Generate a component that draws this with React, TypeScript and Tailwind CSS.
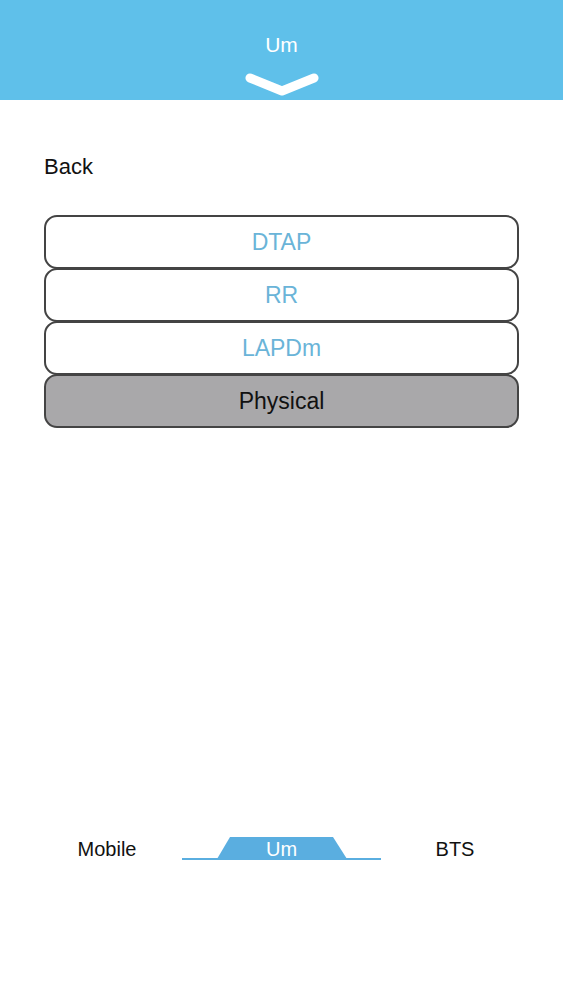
const layers = [
  { name: "DTAP", active: false },
  { name: "RR", active: false },
  { name: "LAPDm", active: false },
  { name: "Physical", active: true },
];

const App = () => {
  return (
    <div className="w-[563px] h-[1000px] bg-white flex flex-col font-['Liberation_Sans',Arial,sans-serif]">
      <header className="h-[100px] bg-[#5fc0ea] flex flex-col items-center">
        <div className="mt-[32px] text-[21px] leading-[26px] text-white">Um</div>
        <svg className="mt-[12px]" width="80" height="28" viewBox="0 0 80 28">
          <path d="M8 8 L40 21 L72 8" fill="none" stroke="white" strokeWidth="9" strokeLinecap="round" strokeLinejoin="round" />
        </svg>
      </header>

      <div className="px-[44px]">
        <div className="mt-[53px] text-[22px] leading-[28px] text-[#111]">Back</div>

        <div className="mt-[34px] flex flex-col">
          {layers.map((layer) => (
            <div
              key={layer.name}
              className={
                layer.active
                  ? "h-[54px] -mt-px first:mt-0 rounded-[13px] border-2 border-[#444] bg-[#a9a8aa] flex items-center justify-center text-[23px] text-[#111]"
                  : "h-[54px] -mt-px first:mt-0 rounded-[13px] border-2 border-[#444] bg-white flex items-center justify-center text-[23px] text-[#6ab4d8]"
              }
            >
              {layer.name}
            </div>
          ))}
        </div>
      </div>

      {/* link diagram: Mobile — Um — BTS */}
      <div className="mt-auto mb-[139px] pl-[44px] flex items-end">
        <div className="w-[126px] text-center text-[20px] leading-[24px] text-[#111]">Mobile</div>
        <div className="relative w-[199px] h-[24px] ml-[12px]">
          <svg className="absolute left-0 top-0" width="199" height="24" viewBox="0 0 199 24">
            <path d="M35 22 L48 0 L151 0 L165 22 Z" fill="#5aaee0" />
            <rect x="0" y="21" width="199" height="2" fill="#5aaee0" />
          </svg>
          <div className="absolute inset-x-0 top-0 text-center text-[20px] leading-[24px] text-white">Um</div>
        </div>
        <div className="w-[148px] text-center text-[20px] leading-[24px] text-[#111]">BTS</div>
      </div>
    </div>
  );
};

export default App;
